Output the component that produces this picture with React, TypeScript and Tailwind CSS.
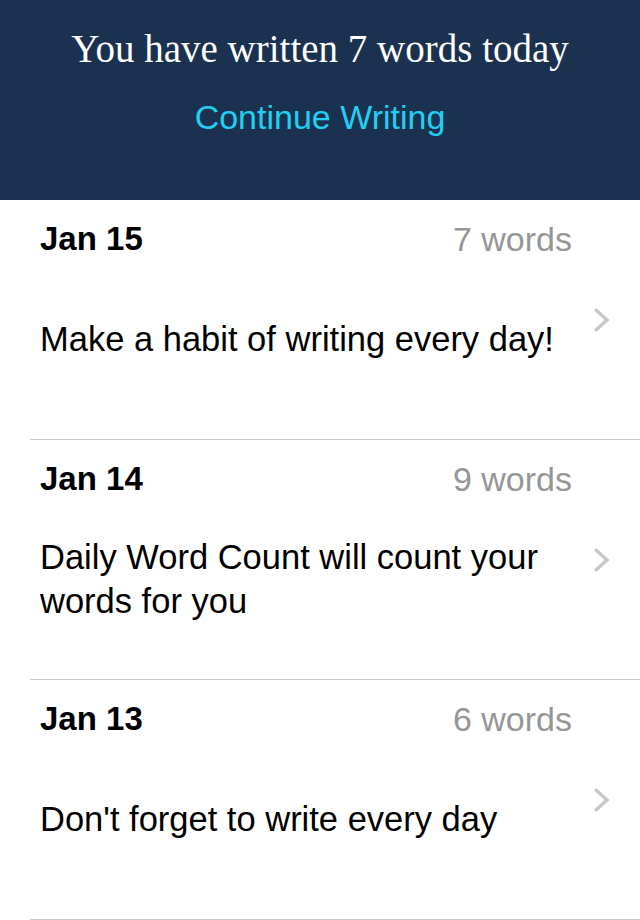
import React from 'react';

const entries = [
  { date: 'Jan 15', words: '7 words', text: 'Make a habit of writing every day!' },
  { date: 'Jan 14', words: '9 words', text: 'Daily Word Count will count your words for you' },
  { date: 'Jan 13', words: '6 words', text: "Don't forget to write every day" },
];

const Chevron = () => (
  <svg width="16" height="24" viewBox="0 0 16 24" fill="none">
    <polyline
      points="2.5,2.5 13,12 2.5,21.5"
      stroke="#c7c7cc"
      strokeWidth="3.5"
      strokeLinecap="square"
      strokeLinejoin="miter"
    />
  </svg>
);

const App = () => {
  return (
    <div className="h-[920px] w-[640px] overflow-hidden bg-white font-['Liberation_Sans',Arial,sans-serif]">
      <header className="flex h-[200px] flex-col items-center bg-[#1a3150]">
        <h1 className="mt-[25px] font-['Liberation_Serif',Georgia,serif] text-[39px] leading-[48px] text-white">
          You have written 7 words today
        </h1>
        <button className="mt-[24px] text-[34px] leading-[40px] text-[#20d0f2]">
          Continue Writing
        </button>
      </header>

      <ul>
        {entries.map((e) => (
          <li key={e.date} className="pl-[30px]">
            <div className="flex h-[240px] items-center border-b border-[#c8c7cc]">
              <div className="flex h-full flex-1 flex-col pl-[10px]">
                <div className="mt-[19px] flex h-[40px] items-center justify-between">
                  <span className="text-[33px] font-bold text-black">{e.date}</span>
                  <span className="text-[34px] text-[#969696]">{e.words}</span>
                </div>
                <div className="mb-[21px] flex flex-1 items-center">
                  <p className="text-[34.5px] leading-[44px] text-black">{e.text}</p>
                </div>
              </div>
              <div className="ml-[22px] mr-[30px] flex w-[16px] items-center">
                <Chevron />
              </div>
            </div>
          </li>
        ))}
      </ul>
    </div>
  );
};

export default App;
